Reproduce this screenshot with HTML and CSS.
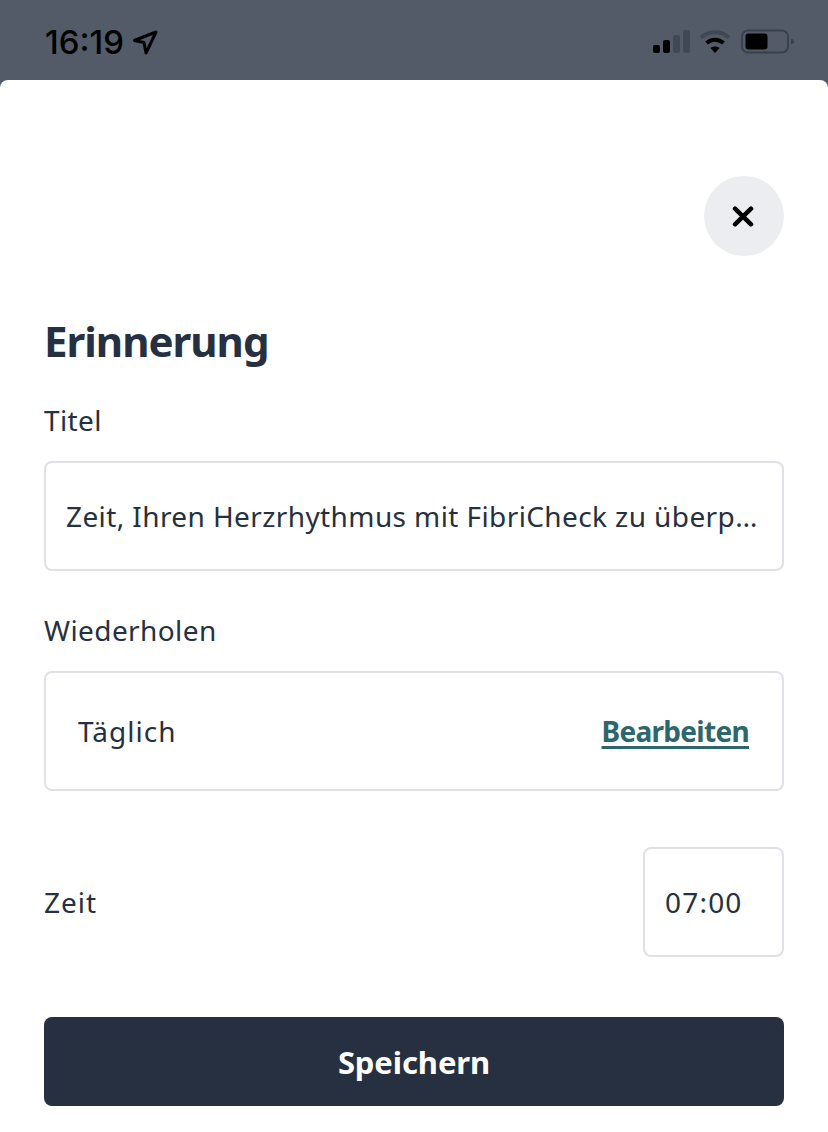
FILE: index.html
```html
<!DOCTYPE html>
<html lang="de">
<head>
<meta charset="utf-8">
<title>Erinnerung</title>
<link rel="stylesheet" href="styles.css">
</head>
<body>
<div class="status">
  <div class="status-left">
    <span class="clock">16:19</span>
    <svg class="loc" width="26" height="26" viewBox="0 0 26 26"><path d="M24 3 2.500 11.500 12 13.500 14 24Z" fill="none" stroke="#000" stroke-width="3" stroke-linejoin="round"/></svg>
  </div>
  <div class="status-right">
    <svg width="40" height="24" viewBox="0 0 40 24"><rect x="1" y="15" width="7" height="8" rx="2" fill="#000"/><rect x="11" y="10" width="7" height="13" rx="2" fill="#000"/><rect x="21" y="5" width="7" height="18" rx="2" fill="#3f4854"/><rect x="31" y="0" width="7" height="23" rx="2" fill="#3f4854"/></svg>
    <svg class="wifi" width="32" height="24" viewBox="0 0 32 24"><path d="M2 7.500C10 .5 22 .5 30 7.500" fill="none" stroke="#3f4854" stroke-width="4"/><path d="M7.500 13C12.500 8.500 19.500 8.500 24.500 13" fill="none" stroke="#000" stroke-width="4"/><path d="M11.500 18 16 23 20.500 18C18 16 14 16 11.500 18Z" fill="#000"/></svg>
    <svg class="batt" width="54" height="26" viewBox="0 0 54 26"><rect x="1" y="1.500" width="46" height="22" rx="6" fill="none" stroke="#38414d" stroke-width="2"/><rect x="4.500" y="4.500" width="22" height="16" rx="3" fill="#000"/><path d="M50 9.500C52 10 53 11 53 12.500S52 15 50 15.500Z" fill="#38414d"/></svg>
  </div>
</div>
<main class="sheet">
  <div class="close-row">
    <button class="close" aria-label="Schließen"><svg width="24" height="24" viewBox="0 0 24 24"><path d="M3 4.700 19 20.300M19 4.700 3 20.300" stroke="#000" stroke-width="4.500" stroke-linecap="round"/></svg></button>
  </div>
  <h1 class="title">Erinnerung</h1>
  <div class="label">Titel</div>
  <div class="field field-title"><span class="ellipsis">Zeit, Ihren Herzrhythmus mit FibriCheck zu überprüfen</span></div>
  <div class="label label-repeat">Wiederholen</div>
  <div class="field field-repeat"><span class="repeat-value">Täglich</span><a class="edit" href="#">Bearbeiten</a></div>
  <div class="time-row"><span>Zeit</span><div class="field field-time">07:00</div></div>
  <button class="save">Speichern</button>
</main>
</body>
</html>
```
FILE: styles.css
```css
* { box-sizing: border-box; }
html, body { margin: 0; height: 100%; }
body {
  width: 828px; height: 1132px; overflow: hidden;
  background: #525b67;
  font-family: "Noto Sans", "Liberation Sans", sans-serif;
  color: #263041;
  display: flex; flex-direction: column;
}
.status { height: 80px; flex: none; display: flex; justify-content: space-between; align-items: flex-start; padding: 26px 33px 0 45px; }
.status-left { display: flex; align-items: center; gap: 8px; }
.clock { font-family: Inter, "Liberation Sans", sans-serif; font-size: 33px; line-height: 32px; font-weight: 500; color: #000; letter-spacing: 0; }
.status-right { display: flex; align-items: flex-start; gap: 8px; padding-top: 4px; }
.wifi { margin-left: -1px; }
.batt { margin-left: 2px; margin-top: -1px; }
.sheet { flex: 1; background: #fff; border-radius: 8px 8px 0 0; padding: 96px 44px 0; display: flex; flex-direction: column; }
.close-row { display: flex; justify-content: flex-end; }
.close { width: 80px; height: 80px; border: 0; border-radius: 50%; background: #ecedf1; display: flex; align-items: center; justify-content: center; padding: 0; }
.title { margin: 53px 0 0; font-size: 42px; line-height: 64px; font-weight: 700; letter-spacing: -1px; }
.label { margin-top: 28px; font-size: 28px; line-height: 38px; letter-spacing: 0.4px; }
.label-repeat { margin-top: 40px; }
.field { border: 2px solid #e0e1e6; border-radius: 8px; font-size: 28px; letter-spacing: 0.4px; display: flex; align-items: center; }
.field-title { margin-top: 22px; height: 110px; padding: 0 24px 0 20px; }
.ellipsis { white-space: nowrap; overflow: hidden; text-overflow: ellipsis; }
.field-repeat { margin-top: 22px; height: 120px; padding: 0 33px 0 32px; justify-content: space-between; }
.repeat-value { letter-spacing: 1px; }
.edit { color: #2d666b; font-weight: 700; letter-spacing: -0.7px; text-decoration: underline; text-underline-offset: 4px; text-decoration-thickness: 3px; }
.time-row { margin-top: 56px; display: flex; justify-content: space-between; align-items: center; font-size: 28px; letter-spacing: 1px; }
.field-time { width: 141px; height: 110px; padding-left: 20px; letter-spacing: 1.2px; }
.save { margin-top: 60px; height: 89px; width: 100%; border: 0; border-radius: 8px; background: #263041; color: #fff; font: 700 31px "Noto Sans", "Liberation Sans", sans-serif; letter-spacing: -0.1px; padding: 0; }
```
